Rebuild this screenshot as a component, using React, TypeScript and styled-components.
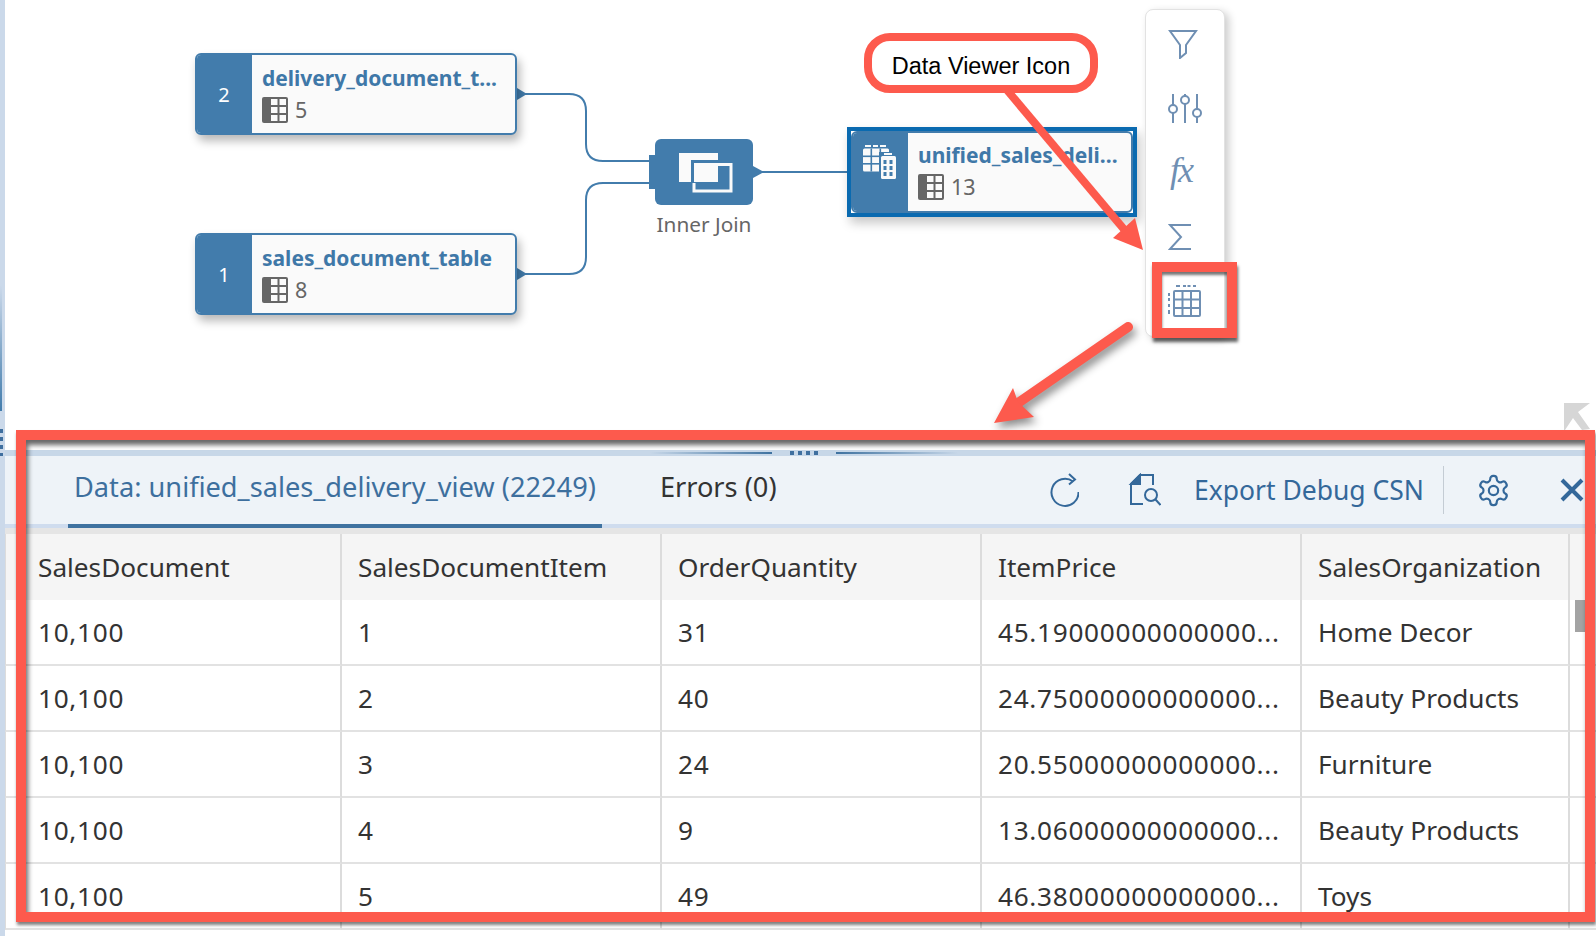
import React from "react";
import styled, { createGlobalStyle } from "styled-components";

const UI = `"Noto Sans", "Open Sans", sans-serif`;
const BLUE = "#427cac";
const RED = "#fd5a4d";

const Global = createGlobalStyle`
  html, body { margin: 0; padding: 0; background: #fff; }
  body { width: 1596px; height: 936px; overflow: hidden; font-family: ${UI}; }
`;

const Page = styled.div`
  position: relative;
  display: flex;
  width: 1596px;
  height: 936px;
  overflow: hidden;
  background: #fff;
`;

const SideRail = styled.div`
  position: relative;
  flex: 0 0 5px;
  background: #cbd9ea;
`;

const RailGlow = styled.div`
  position: absolute;
  left: 0;
  top: 285px;
  width: 2px;
  height: 126px;
  background: linear-gradient(to bottom, #cbd9ea, #427cac);
`;

const RailDots = styled.div`
  position: absolute;
  left: 0;
  top: 429px;
  width: 3px;
  height: 27px;
  background: repeating-linear-gradient(to bottom, #3f6f9f 0 4px, transparent 4px 8px);
`;

const Main = styled.div`
  flex: 1;
  display: flex;
  flex-direction: column;
  min-width: 0;
`;

const Canvas = styled.div`
  position: relative;
  flex: 0 0 450px;
`;

const Wires = styled.svg`
  position: absolute;
  left: -5px;
  top: 0;
`;

const NodeCard = styled.div<{ $x: number; $y: number }>`
  position: absolute;
  left: ${(p) => p.$x - 5}px;
  top: ${(p) => p.$y}px;
  width: 322px;
  height: 82px;
  box-sizing: border-box;
  display: flex;
  background: #fafafa;
  border: 2px solid ${BLUE};
  border-radius: 6px;
  box-shadow: 3px 6px 10px rgba(0, 0, 0, 0.28);
  overflow: hidden;
`;

const NodeBadge = styled.div`
  flex: 0 0 56px;
  margin-left: -1px;
  display: flex;
  align-items: center;
  justify-content: center;
  background: ${BLUE};
  color: #fff;
  font-size: 20px;
`;

const NodeBody = styled.div<{ $tight?: boolean }>`
  flex: 1;
  min-width: 0;
  padding: ${(p) => (p.$tight ? 8 : 9)}px 0 0 10px;
  display: flex;
  flex-direction: column;
  gap: 5px;
`;

const NodeTitle = styled.div`
  color: #3f78a8;
  font-size: 21px;
  font-weight: 700;
  line-height: 28px;
  white-space: nowrap;
`;

const NodeMeta = styled.div`
  display: flex;
  align-items: center;
  gap: 7px;
  color: #666;
  font-size: 21.5px;
  line-height: 26px;
`;

const SelectedFrame = styled.div`
  position: absolute;
  left: 842px;
  top: 127px;
  width: 290px;
  height: 90px;
  box-sizing: border-box;
  border: 4px solid #0a6ab0;
  box-shadow: 3px 6px 10px rgba(0, 0, 0, 0.22);
`;

const SelectedInner = styled.div`
  display: flex;
  height: 100%;
  box-sizing: border-box;
  border: 2px solid ${BLUE};
  border-radius: 6px;
  background: #fafafa;
  overflow: hidden;
`;

const SelectedBadge = styled.div`
  flex: 0 0 55px;
  display: flex;
  justify-content: center;
  padding: 12px 3px 0 0;
  box-sizing: border-box;
  background: ${BLUE};
`;

const JoinNode = styled.div`
  position: absolute;
  left: 650px;
  top: 139px;
  width: 98px;
  height: 66px;
  display: flex;
  align-items: center;
  justify-content: center;
  border-radius: 6px;
  background: ${BLUE};
`;

const JoinLabel = styled.div`
  position: absolute;
  left: 640px;
  top: 210px;
  width: 118px;
  text-align: center;
  color: #666;
  font-size: 20.8px;
  line-height: 28px;
`;

const Toolbox = styled.div`
  position: absolute;
  left: 1140px;
  top: 9px;
  width: 80px;
  height: 328px;
  box-sizing: border-box;
  display: flex;
  flex-direction: column;
  padding-top: 16px;
  gap: 24px;
  background: #fff;
  border: 1px solid #e2e2e2;
  border-radius: 8px;
  box-shadow: 4px 3px 9px rgba(0, 0, 0, 0.2);
`;

const ToolSlot = styled.div<{ $dx?: number; $dy?: number }>`
  height: 40px;
  display: flex;
  align-items: center;
  justify-content: center;
  color: #6f8fb3;
  transform: translate(${(p) => p.$dx ?? 0}px, ${(p) => p.$dy ?? 0}px);
`;

const Fx = styled.span`
  font-family: "Liberation Serif", serif;
  font-style: italic;
  font-size: 36px;
  line-height: 40px;
  letter-spacing: -2px;
  color: #6f8fb3;
  margin-right: 8px;
`;

const Callout = styled.div`
  position: absolute;
  left: 859px;
  top: 33px;
  width: 234px;
  height: 60px;
  box-sizing: border-box;
  padding-top: 6px;
  display: flex;
  align-items: center;
  justify-content: center;
  background: #fff;
  border: 8px solid ${RED};
  border-radius: 26px;
  font-family: "Liberation Sans", Arial, sans-serif;
  font-size: 23.5px;
  color: #000;
`;

const IconBoxMark = styled.div`
  position: absolute;
  left: 1147px;
  top: 262px;
  width: 85px;
  height: 76px;
  box-sizing: border-box;
  border: 10px solid ${RED};
  box-shadow: 1px 4px 3px rgba(0, 0, 0, 0.6), inset 0 3px 3px rgba(0, 0, 0, 0.55);
`;

const Arrows = styled.svg`
  position: absolute;
  left: -5px;
  top: 0;
  pointer-events: none;
`;

const ExpandHint = styled.svg`
  position: absolute;
  left: 1559px;
  top: 403px;
`;

const Panel = styled.div`
  position: relative;
  flex: 1;
  display: flex;
  flex-direction: column;
  min-height: 0;
`;

const Sash = styled.div`
  position: relative;
  flex: 0 0 6px;
  background: #c7d7e8;
`;

const SashLine = styled.div<{ $x: number; $dir: "left" | "right" }>`
  position: absolute;
  left: ${(p) => p.$x}px;
  top: 2px;
  width: 122px;
  height: 2px;
  background: linear-gradient(to ${(p) => p.$dir}, #3f72a0, #c7d7e8);
`;

const SashGrip = styled.div`
  position: absolute;
  left: 785px;
  top: 1px;
  width: 28px;
  height: 4px;
  background: repeating-linear-gradient(to right, #3f6f9f 0 4px, transparent 4px 8px);
`;

const TabBar = styled.div`
  flex: 0 0 72px;
  box-sizing: border-box;
  display: flex;
  align-items: flex-start;
  padding-left: 63px;
  background: #eef3f8;
  border-bottom: 4px solid #cfdcee;
`;

const Tab = styled.div<{ $active?: boolean }>`
  height: 72px;
  margin-bottom: -4px;
  box-sizing: border-box;
  padding: 0 6px 8px;
  margin-right: 52px;
  display: flex;
  align-items: center;
  font-size: 27.2px;
  white-space: nowrap;
  color: ${(p) => (p.$active ? "#3d6f9e" : "#333")};
  border-bottom: 4px solid ${(p) => (p.$active ? "#3f72a0" : "transparent")};
`;

const TabTools = styled.div`
  margin-left: auto;
  height: 68px;
  display: flex;
  align-items: center;
  color: #34689a;
`;

const ToolIcon = styled.span<{ $w: number; $pad?: number }>`
  flex: 0 0 ${(p) => p.$w}px;
  box-sizing: border-box;
  padding-left: ${(p) => p.$pad ?? 0}px;
  display: flex;
  justify-content: center;
  align-items: center;
`;

const ExportLabel = styled.span`
  color: #34689a;
  font-size: 26.5px;
  white-space: nowrap;
  margin-right: 19px;
`;

const ToolRule = styled.span`
  width: 1px;
  height: 48px;
  background: #c4ccd4;
`;

const TableFrame = styled.div`
  flex: 1;
  position: relative;
  min-height: 0;
  overflow: hidden;
  background: #fff;
  border-top: 6px solid #e5e5e5;
`;

const GridTable = styled.div`
  display: grid;
  grid-template-columns: 337px 320px 320px 320px 268px 26px;
  grid-auto-rows: 66px;
`;

const Cell = styled.div<{ $head?: boolean; $num?: boolean }>`
  box-sizing: border-box;
  padding: 0 6px 0 16px;
  display: flex;
  align-items: center;
  min-width: 0;
  font-size: 26.2px;
  letter-spacing: ${(p) => (p.$num ? "0.7px" : "0")};
  color: #333;
  white-space: nowrap;
  background: ${(p) => (p.$head ? "#f5f5f5" : "#fff")};
  border-right: 2px solid #dcdcdc;
  border-bottom: ${(p) => (p.$head ? "0" : "2px solid #e2e2e2")};
`;

const FirstCell = styled(Cell)`
  padding-left: 32px;
  border-left: 1px solid #dcdcdc;
`;

const ScrollCell = styled.div<{ $head?: boolean }>`
  background: ${(p) => (p.$head ? "#f5f5f5" : "#fff")};
  border-bottom: ${(p) => (p.$head ? "0" : "2px solid #e2e2e2")};
`;

const Thumb = styled.div`
  position: absolute;
  left: 1570px;
  top: 66px;
  width: 11px;
  height: 32px;
  background: #a3a3a3;
`;

const BigMark = styled.div`
  position: absolute;
  left: 16px;
  top: 430px;
  width: 1579px;
  height: 492px;
  box-sizing: border-box;
  border: 10px solid ${RED};
  box-shadow: 1px 3px 3px rgba(0, 0, 0, 0.5), inset 2px 5px 5px rgba(0, 0, 0, 0.6);
  pointer-events: none;
`;

const GridGlyph = () => (
  <svg width="26" height="26" viewBox="0 0 26 26">
    <rect width="26" height="26" rx="2" fill="#666" />
    <g fill="#fafafa">
      <rect x="9" y="2" width="6.5" height="6" />
      <rect x="17.5" y="2" width="6.5" height="6" />
      <rect x="9" y="10" width="6.5" height="6" />
      <rect x="17.5" y="10" width="6.5" height="6" />
      <rect x="9" y="18" width="6.5" height="6" />
      <rect x="17.5" y="18" width="6.5" height="6" />
    </g>
  </svg>
);

const ViewGlyph = () => (
  <svg width="33" height="34" viewBox="0 0 33 34">
    <g fill="#fafafa">
      <rect x="2" y="0" width="6" height="2" />
      <rect x="10" y="0" width="5" height="2" />
      <rect x="17" y="0" width="6" height="2" />
      <rect x="0" y="3.5" width="26" height="23" rx="1.5" />
    </g>
    <g fill={BLUE}>
      <rect x="7.5" y="3.5" width="1.6" height="23" />
      <rect x="16.5" y="3.5" width="1.6" height="23" />
      <rect x="0" y="10.5" width="26" height="1.6" />
      <rect x="0" y="18" width="26" height="1.6" />
      <rect x="16" y="7" width="17" height="27" />
    </g>
    <g fill="#fafafa">
      <rect x="21" y="8" width="8" height="2" />
      <rect x="18" y="11" width="15" height="23" rx="1.5" />
    </g>
    <g fill={BLUE}>
      <rect x="20.5" y="15" width="3" height="4" />
      <rect x="26.5" y="15" width="3" height="4" />
      <rect x="20.5" y="21" width="3" height="4" />
      <rect x="26.5" y="21" width="3" height="4" />
      <rect x="20.5" y="27" width="3" height="4" />
      <rect x="26.5" y="27" width="3" height="4" />
    </g>
  </svg>
);

const JoinGlyph = () => (
  <svg width="58" height="44" viewBox="0 0 58 44">
    <rect x="4" y="3" width="39" height="29" fill="#fafafa" />
    <path d="M17.5 34V11.5H43" fill="none" stroke={BLUE} strokeWidth="3" />
    <path d="M43 14.5H56V41H19V33" fill="none" stroke="#fafafa" strokeWidth="3" />
  </svg>
);

const FilterGlyph = () => (
  <svg width="30" height="30" viewBox="0 0 30 30" fill="none" stroke="currentColor" strokeWidth="2">
    <path d="M2 2h26l-10 14v8l-6 5V16z" strokeLinejoin="miter" />
  </svg>
);

const SlidersGlyph = () => (
  <svg width="34" height="30" viewBox="0 0 34 30" fill="none" stroke="currentColor" strokeWidth="2">
    <path d="M5 1v11M5 20v10M17 1v2M17 11v19M29 1v15M29 24v6" />
    <circle cx="5" cy="16" r="4" />
    <circle cx="17" cy="7" r="4" />
    <circle cx="29" cy="20" r="4" />
  </svg>
);

const SigmaGlyph = () => (
  <svg width="24" height="26" viewBox="0 0 24 26" fill="none" stroke="currentColor" strokeWidth="2">
    <path d="M23 1H2l11 12L2 25h21" />
  </svg>
);

const DataGlyph = () => (
  <svg width="34" height="34" viewBox="0 0 34 34" fill="none" stroke="#6f8fb3" strokeWidth="2">
    <path d="M15 1h3M19.5 1h3M25 1h3M8 1h4" />
    <rect x="6" y="6" width="26" height="25" rx="1" />
    <path d="M6 14.5h26M6 23h26M14.5 6v25M23 6v25" />
    <path d="M1 8v3M1 13v3M1 19v3M1 25v4" />
  </svg>
);

const RefreshGlyph = () => (
  <svg width="30" height="34" viewBox="0 0 30 34" fill="none" stroke="currentColor" strokeWidth="2">
    <path d="M24 8.5A13.5 13.5 0 1 0 29.5 19" />
    <path d="M20 1l6 5.5-6 5" />
  </svg>
);

const DocSearchGlyph = () => (
  <svg width="34" height="34" viewBox="0 0 34 34" fill="none" stroke="currentColor" strokeWidth="2">
    <path d="M26 12V2H13L4 11V31H16" />
    <path d="M13 2L4 11H13z" fill="currentColor" />
    <circle cx="24" cy="22" r="6" />
    <path d="M28.5 26.5L33.5 32" />
  </svg>
);

const GearGlyph = () => (
  <svg width="35" height="35" viewBox="0 0 24 24" fill="none" stroke="currentColor" strokeWidth="1.5" strokeLinejoin="round">
    <path d="M12.22 2h-.44a2 2 0 0 0-2 2v.18a2 2 0 0 1-1 1.73l-.43.25a2 2 0 0 1-2 0l-.15-.08a2 2 0 0 0-2.73.73l-.22.38a2 2 0 0 0 .73 2.73l.15.1a2 2 0 0 1 1 1.72v.51a2 2 0 0 1-1 1.74l-.15.09a2 2 0 0 0-.73 2.73l.22.38a2 2 0 0 0 2.73.73l.15-.08a2 2 0 0 1 2 0l.43.25a2 2 0 0 1 1 1.73V20a2 2 0 0 0 2 2h.44a2 2 0 0 0 2-2v-.18a2 2 0 0 1 1-1.73l.43-.25a2 2 0 0 1 2 0l.15.08a2 2 0 0 0 2.73-.73l.22-.39a2 2 0 0 0-.73-2.73l-.15-.08a2 2 0 0 1-1-1.74v-.5a2 2 0 0 1 1-1.74l.15-.09a2 2 0 0 0 .73-2.73l-.22-.38a2 2 0 0 0-2.73-.73l-.15.08a2 2 0 0 1-2 0l-.43-.25a2 2 0 0 1-1-1.73V4a2 2 0 0 0-2-2z" />
    <circle cx="12" cy="12" r="3.2" />
  </svg>
);

const CloseGlyph = () => (
  <svg width="26" height="26" viewBox="0 0 26 26" fill="none" stroke="currentColor" strokeWidth="4">
    <path d="M3 3l20 20M23 3L3 23" />
  </svg>
);

const heads = ["SalesDocument", "SalesDocumentItem", "OrderQuantity", "ItemPrice", "SalesOrganization"];
const rows = [
  ["10,100", "1", "31", "45.19000000000000...", "Home Decor"],
  ["10,100", "2", "40", "24.75000000000000...", "Beauty Products"],
  ["10,100", "3", "24", "20.55000000000000...", "Furniture"],
  ["10,100", "4", "9", "13.06000000000000...", "Beauty Products"],
  ["10,100", "5", "49", "46.38000000000000...", "Toys"],
];

export default function App() {
  return (
    <Page>
      <Global />
      <SideRail>
        <RailGlow />
        <RailDots />
      </SideRail>
      <Main>
        <Canvas>
          <Wires width="1596" height="450" fill="none" stroke={BLUE} strokeWidth="2">
            <path d="M517 94h52q17 0 17 17v33q0 17 17 17h50" />
            <path d="M517 274h52q17 0 17-17v-57q0-17 17-17h50" />
            <path d="M753 172h94" />
            <path d="M517 88l10 6-10 6z" fill={BLUE} stroke="none" />
            <path d="M517 268l10 6-10 6z" fill={BLUE} stroke="none" />
            <path d="M753 166l11 6-11 6z" fill={BLUE} stroke="none" />
            <rect x="649" y="155" width="6" height="34" fill={BLUE} stroke="none" />
          </Wires>
          <NodeCard $x={195} $y={53}>
            <NodeBadge>2</NodeBadge>
            <NodeBody>
              <NodeTitle>delivery_document_t...</NodeTitle>
              <NodeMeta><GridGlyph />5</NodeMeta>
            </NodeBody>
          </NodeCard>
          <NodeCard $x={195} $y={233}>
            <NodeBadge>1</NodeBadge>
            <NodeBody>
              <NodeTitle>sales_document_table</NodeTitle>
              <NodeMeta><GridGlyph />8</NodeMeta>
            </NodeBody>
          </NodeCard>
          <JoinNode><JoinGlyph /></JoinNode>
          <JoinLabel>Inner Join</JoinLabel>
          <SelectedFrame>
            <SelectedInner>
              <SelectedBadge><ViewGlyph /></SelectedBadge>
              <NodeBody $tight>
                <NodeTitle>unified_sales_deli...</NodeTitle>
                <NodeMeta><GridGlyph />13</NodeMeta>
              </NodeBody>
            </SelectedInner>
          </SelectedFrame>
          <Toolbox>
            <ToolSlot $dx={-2} $dy={-2}><FilterGlyph /></ToolSlot>
            <ToolSlot $dy={-2}><SlidersGlyph /></ToolSlot>
            <ToolSlot $dy={-4}><Fx>fx</Fx></ToolSlot>
            <ToolSlot $dx={-5} $dy={-1}><SigmaGlyph /></ToolSlot>
            <ToolSlot><DataGlyph /></ToolSlot>
          </Toolbox>
          <IconBoxMark />
          <Callout>Data Viewer Icon</Callout>
          <Arrows width="1596" height="450" fill={RED} stroke="none">
            <path d="M1007 90L1133 240" stroke={RED} strokeWidth="8" fill="none" />
            <path d="M1135 218l8 32-30-12z" />
            <g style={{ filter: "drop-shadow(3px 5px 4px rgba(0,0,0,.45))" }}>
              <path d="M1128 327L1018 403" stroke={RED} strokeWidth="10" strokeLinecap="round" fill="none" />
              <path d="M994 423L1013 388 1018 402 1034 417z" />
            </g>
          </Arrows>
          <ExpandHint width="27" height="27" viewBox="0 0 27 27" fill="#d6d6d6">
            <path d="M0 0H26L14 9 26 26 18 27 9 15 1 27H0z" />
          </ExpandHint>
        </Canvas>
        <Panel>
          <Sash>
            <SashLine $x={645} $dir="left" />
            <SashGrip />
            <SashLine $x={831} $dir="right" />
          </Sash>
          <TabBar>
            <Tab $active>Data: unified_sales_delivery_view (22249)</Tab>
            <Tab>Errors (0)</Tab>
            <TabTools>
              <ToolIcon $w={60}><RefreshGlyph /></ToolIcon>
              <ToolIcon $w={100}><DocSearchGlyph /></ToolIcon>
              <ExportLabel>Export Debug CSN</ExportLabel>
              <ToolRule />
              <ToolIcon $w={98}><GearGlyph /></ToolIcon>
              <ToolIcon $w={54} $pad={6}><CloseGlyph /></ToolIcon>
            </TabTools>
          </TabBar>
          <TableFrame>
            <GridTable>
              {heads.map((h, i) =>
                i === 0 ? <FirstCell key={h} $head>{h}</FirstCell> : <Cell key={h} $head>{h}</Cell>
              )}
              <ScrollCell $head />
              {rows.map((r, ri) => (
                <React.Fragment key={ri}>
                  {r.map((c, ci) =>
                    ci === 0 ? (
                      <FirstCell key={ci} $num>{c}</FirstCell>
                    ) : (
                      <Cell key={ci} $num={ci < 4}>{c}</Cell>
                    )
                  )}
                  <ScrollCell />
                </React.Fragment>
              ))}
            </GridTable>
            <Thumb />
          </TableFrame>
        </Panel>
      </Main>
      <BigMark />
    </Page>
  );
}
